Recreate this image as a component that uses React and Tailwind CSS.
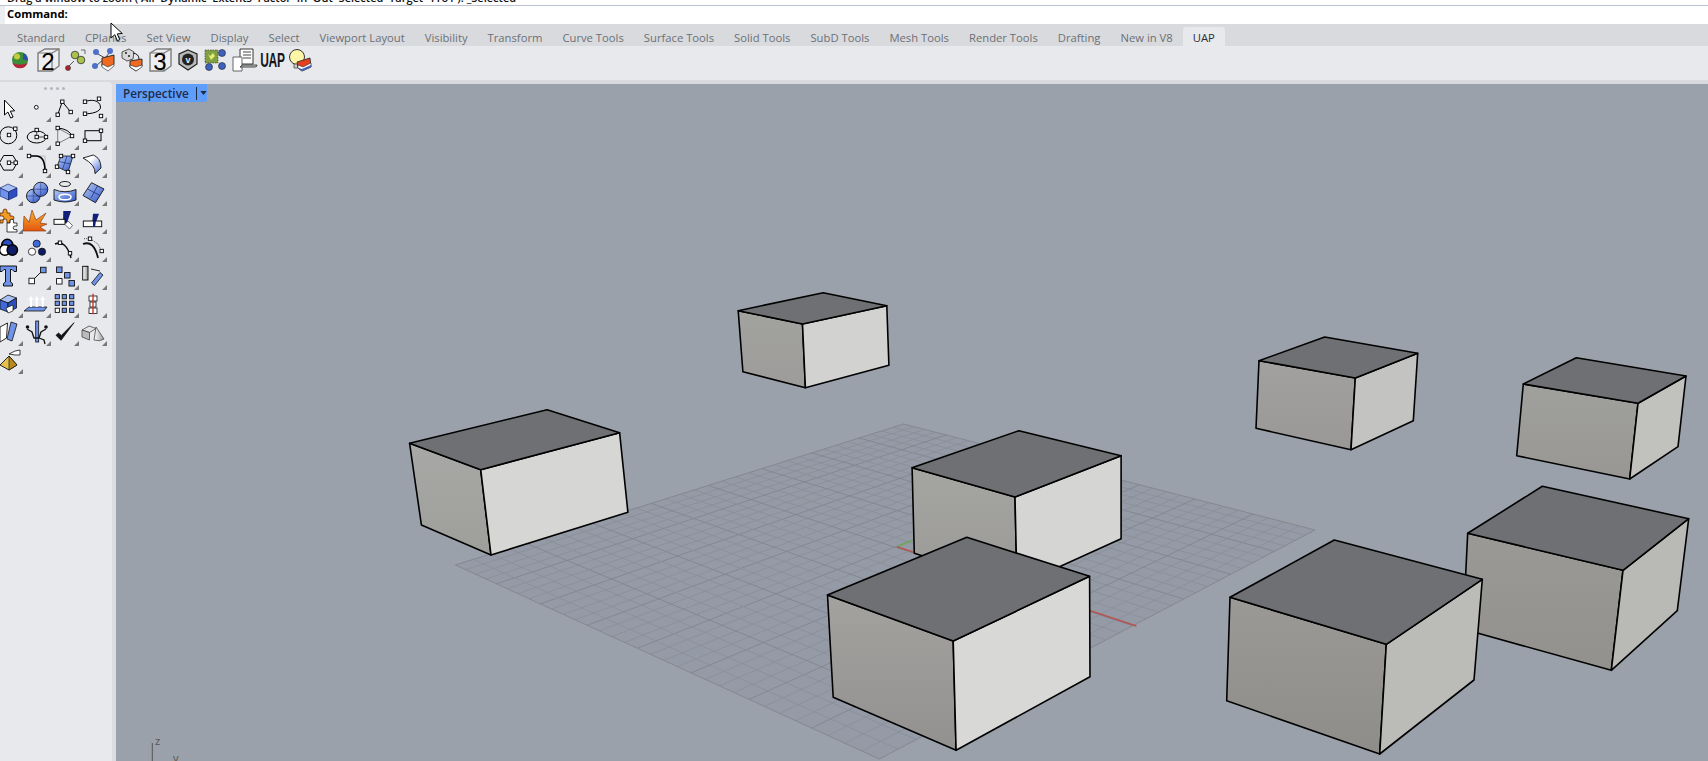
import React from "react";

const tabs = ["Standard", "CPlanes", "Set View", "Display", "Select", "Viewport Layout", "Visibility", "Transform", "Curve Tools", "Surface Tools", "Solid Tools", "SubD Tools", "Mesh Tools", "Render Tools", "Drafting", "New in V8"];

// little white handle square used all over the curve icons
const H = ({ x, y, s = 3.4 }) => <rect x={x - s / 2} y={y - s / 2} width={s} height={s} fill="#fff" stroke="#000" strokeWidth="0.9" />;
const Sq = ({ x, y, s = 5.5, f = "#6f93e8" }) => <rect x={x - s / 2} y={y - s / 2} width={s} height={s} fill={f} stroke="#111" strokeWidth="0.9" />;

const Defs = () => (
  <defs>
    <linearGradient id="ib" x1="0" y1="0" x2="1" y2="1">
      <stop offset="0" stopColor="#b9cdf7" />
      <stop offset="1" stopColor="#2f55c8" />
    </linearGradient>
    <linearGradient id="iw" x1="0" y1="0" x2="1" y2="1">
      <stop offset="0.35" stopColor="#fff" />
      <stop offset="1" stopColor="#3f68d8" />
    </linearGradient>
    <linearGradient id="io" x1="0" y1="0" x2="0" y2="1">
      <stop offset="0" stopColor="#f9b233" />
      <stop offset="1" stopColor="#e2560f" />
    </linearGradient>
    <linearGradient id="ig" x1="0" y1="0" x2="1" y2="0">
      <stop offset="0" stopColor="#fff" />
      <stop offset="1" stopColor="#999" />
    </linearGradient>
  </defs>
);

const tools = [
  // row 1
  { d: <path d="M9.5 6v15l3.4-3 2.8 6 2.4-1-2.8-5.8 4.4-.4z" fill="#fff" stroke="#000" strokeWidth="1" strokeLinejoin="round" /> },
  { d: <circle cx="13.3" cy="13.3" r="1.9" fill="#fff" stroke="#000" strokeWidth="0.9" /> },
  { d: <><path d="M6.7 20.7 11.3 7.7 19.7 18" fill="none" stroke="#000" strokeWidth="1" /><H x={11.3} y={7.7} /><H x={19.7} y={18} /><H x={6.7} y={20.7} /></> },
  { d: <><path d="M6 7.7C12 5 21 6 21.500 13 21.800 18 12 20 6 19.700" fill="none" stroke="#000" strokeWidth="1" /><H x={6} y={7.7} /><H x={20} y={4.7} /><H x={6} y={19.7} /><H x={22} y={22} /></> },
  // row 2
  { d: <><circle cx="13.3" cy="13.3" r="8.500" fill="none" stroke="#000" strokeWidth="1" /><H x={14} y={13} /><H x={20.3} y={6.7} /></> },
  { d: <><ellipse cx="13.7" cy="15" rx="9.500" ry="6" fill="none" stroke="#000" strokeWidth="1" /><path d="M13.700 8v7H23" stroke="#000" strokeWidth="0.7" fill="none" /><H x={13.7} y={8} /><H x={13.7} y={15} /><H x={23} y={15} /></> },
  { d: <><path d="M6.700 6 21 14 6.700 21.700z" fill="none" stroke="#666" strokeWidth="0.8" /><path d="M6.700 6Q18 7 21 14" fill="none" stroke="#000" strokeWidth="1" /><H x={6.7} y={6} /><H x={21} y={14} /><H x={6.7} y={21.7} /></> },
  { d: <><rect x="6" y="8.700" width="16" height="10" fill="none" stroke="#000" strokeWidth="1" /><H x={22} y={8.7} /><H x={6} y={18.7} /></> },
  // row 3
  { d: <><path d="M4.500 12.700 8.700 5.500h9.200l4.400 7.200-4.400 7.400H8.700z" fill="none" stroke="#000" strokeWidth="1" /><path d="M14 12.700h6.700" stroke="#000" strokeWidth="0.7" /><H x={14} y={12.7} /><H x={20.7} y={12.7} /></> },
  { d: <><path d="M6 6H22V21" fill="none" stroke="#aaa" strokeWidth="0.7" /><path d="M6 6H13Q22 6 22 21" fill="none" stroke="#000" strokeWidth="1.700" /><H x={6} y={6} /><H x={22} y={21} /></> },
  { d: <><path d="M10 6H22L17 22 6 16.700z" fill="url(#ib)" stroke="#111" strokeWidth="0.8" /><path d="M16 6 11.500 19.500M8 11.500 19.500 14" stroke="#1d2f78" strokeWidth="0.7" /><H x={10} y={6} /><H x={22} y={6} /><H x={6} y={16.7} /><H x={17} y={22} /></> },
  { d: <path d="M4 8 14.300 5Q22 8 22 18L16 23.700Q17 15 4 8z" fill="url(#iw)" stroke="#111" strokeWidth="0.9" /> },
  // row 4
  { d: <><path d="M5 10 13 6l9 4-8.500 4z" fill="#a9c0f5" stroke="#1a2a70" strokeWidth="0.7" /><path d="M5 10l8.500 4v8L5 18z" fill="#6e93ec" stroke="#1a2a70" strokeWidth="0.7" /><path d="M22 10l-8.500 4v8l8.500-4z" fill="#2b4fc0" stroke="#1a2a70" strokeWidth="0.7" /></> },
  { d: <><circle cx="10.3" cy="18" r="6.800" fill="url(#ib)" stroke="#111" strokeWidth="0.9" /><path d="M3.600 18h13.400M10.300 11.200v13.400" stroke="#1d2f78" strokeWidth="0.5" /><circle cx="17.700" cy="11.300" r="7.100" fill="url(#ib)" stroke="#111" strokeWidth="0.9" /><path d="M10.600 11.300h14.200M17.700 4.200v14.200" stroke="#1d2f78" strokeWidth="0.5" /></> },
  { d: <><ellipse cx="14" cy="6" rx="5.500" ry="2.500" fill="none" stroke="#111" strokeWidth="0.9" /><path d="M3 11.500Q14 16 25 11.500V22Q14 26 3 22z" fill="url(#ib)" stroke="#111" strokeWidth="0.9" /><ellipse cx="14" cy="19" rx="6" ry="2.800" fill="none" stroke="#fff" strokeWidth="1.600" /></> },
  { d: <><path d="M4 17.500 12.500 4.700 25 11 16.500 24.700z" fill="url(#ib)" stroke="#111" strokeWidth="0.9" /><path d="M8.500 11 21 17.500M12 20 18.500 8" stroke="#12246e" strokeWidth="0.7" /></> },
  // row 5
  { d: <><path d="M5 7h3V5a2 2 0 0 1 4 0v2h3v3h2a2 2 0 0 1 0 4h-2v3h-3v-2a2 2 0 0 0-4 0v2H5v-3h2a2 2 0 0 0 0-4H5z" fill="#f29a24" stroke="#5a2a05" strokeWidth="0.8" /><path d="M12 17h3v-2a1.800 1.800 0 0 1 3.600 0v2H22v3h-2a1.800 1.800 0 0 0 0 3.600h2V26h-10z" fill="#fff" stroke="#111" strokeWidth="0.8" /></> },
  { d: <path d="M0 25 1 10 6 16 9 4 13 14 23 7 17 17 24 18 17 21 23 25z" fill="url(#io)" stroke="#7b2c06" strokeWidth="0.6" /> },
  { d: <><path d="M12.300 5H20L16 17h-4z" fill="#0f1f7a" /><rect x="3" y="13.300" width="11" height="5" fill="#fff" stroke="#000" strokeWidth="0.9" /><path d="M17 15l4.500 4.500-3 3.500-4.500-4.500z" fill="#fff" stroke="#444" strokeWidth="0.8" /></> },
  { d: <><path d="M14 7.700h6L16 19h-3z" fill="#0f1f7a" /><rect x="4.300" y="15" width="18.400" height="5.700" fill="#fff" stroke="#000" strokeWidth="0.9" /><path d="M14 15h3l-1 5.700h-2z" fill="#0f1f7a" /></> },
  // row 6
  { d: <><circle cx="12.300" cy="10.800" r="5.500" fill="#2b4fc0" stroke="#000" strokeWidth="1.500" /><circle cx="9.800" cy="16" r="5.200" fill="#fff" stroke="#000" strokeWidth="1.500" /><circle cx="17.300" cy="16" r="5.200" fill="#0e1c63" stroke="#000" strokeWidth="1.500" /></> },
  { d: <><circle cx="13.700" cy="9.700" r="3.600" fill="#3f68d8" stroke="#111" strokeWidth="0.8" /><circle cx="9" cy="17.700" r="3.600" fill="#fff" stroke="#111" strokeWidth="0.8" /><circle cx="19" cy="17.700" r="3.600" fill="#0e1c63" stroke="#111" strokeWidth="0.8" /></> },
  { d: <><path d="M4 10Q15 5.500 20 24" fill="none" stroke="#111" strokeWidth="1.500" /><H x={9} y={8.7} /><H x={19} y={19.3} /></> },
  { d: <><path d="M4 10Q15 6 19 24" fill="none" stroke="#111" strokeWidth="1.800" /><path d="M5 4.700h6M13 6l6 4 3 6" fill="none" stroke="#111" strokeWidth="0.8" strokeDasharray="1 1.200" /><H x={11} y={4.7} /><H x={22.7} y={17} /></> },
  // row 7
  { d: <path d="M5 4h16.500v5.500H19L17 7.500h-1.500v12.500l2 1.500V24H8.500v-2.500l2-1.500V7.500H9L7 9.500H5z" fill="#6f93e8" stroke="#000" strokeWidth="0.9" /> },
  { d: <><path d="M11 17 18 10" stroke="#000" strokeWidth="0.9" /><Sq x={8.7} y={19} f="#fff" /><Sq x={20.3} y={8} /></> },
  { d: <><Sq x={8.3} y={7.7} /><Sq x={16.3} y={13.3} /><Sq x={8.3} y={19.3} f="#fff" /><Sq x={20.7} y={21.3} /></> },
  { d: <><rect x="3.700" y="4.300" width="5.300" height="13.700" fill="url(#ig)" stroke="#000" strokeWidth="0.9" /><path d="M12.500 21 21 10.500l3 2.500-8.500 10.500z" fill="#6f93e8" stroke="#111" strokeWidth="0.8" /><path d="M12 7 21 9" fill="none" stroke="#111" strokeWidth="0.9" /></> },
  // row 8
  { d: <><path d="M5 10 13 5l8.500 3L13 13z" fill="#a9c0f5" stroke="#111" strokeWidth="0.8" /><path d="M5 10l8 3v9l-8-3z" fill="#3f68d8" stroke="#111" strokeWidth="0.8" /><path d="M21.500 8 13 13v9l8.500-4z" fill="#2b4fc0" stroke="#111" strokeWidth="0.8" /><path d="M11 18l7-3v6l-5 2z" fill="#fff" stroke="#111" strokeWidth="0.7" /></> },
  { d: <><path d="M1 21h20l3-4H6z" fill="#6f93e8" stroke="#111" strokeWidth="0.8" /><path d="M8 17V9M13.700 17V9M19.700 17V9" stroke="#fff" strokeWidth="2" /><path d="M5.500 10 8 6l2.500 4zM11.200 10l2.500-4 2.500 4zM17.200 10l2.500-4 2.500 4z" fill="#fff" /></> },
  { d: <>{[[6.3, 6.7, 1], [13.3, 6.7, 1], [20.7, 6.7, 1], [6.3, 13.3, 1], [13.3, 13.3, 1], [20.7, 13.3, 1], [6.3, 20.3, 0], [13.3, 20.3, 1], [20.7, 20.3, 1]].map(([x, y, b]) => <Sq key={`${x}-${y}`} x={x} y={y} s={4.2} f={b ? "#6f93e8" : "#fff"} />)}</> },
  { d: <><rect x="10" y="6" width="8" height="5" fill="#fff" stroke="#111" strokeWidth="0.8" /><rect x="11" y="12" width="6" height="5" fill="#fff" stroke="#111" strokeWidth="0.8" /><rect x="10" y="18" width="8" height="5.500" fill="#fff" stroke="#111" strokeWidth="0.8" /><path d="M14 3.700v20.600" stroke="#c8362b" strokeWidth="1.400" /></> },
  // row 9
  { d: <><path d="M5 9 12.500 5l-1 15-6.500 4z" fill="#fff" stroke="#111" strokeWidth="0.9" /><path d="M16 4l6 2-5 17-5-2z" fill="#6f93e8" stroke="#111" strokeWidth="0.8" /></> },
  { d: <><rect x="12.700" y="3" width="3" height="21" fill="#6f93e8" stroke="#111" strokeWidth="0.8" /><circle cx="4.500" cy="9" r="1.800" fill="#111" /><circle cx="23" cy="9" r="1.800" fill="#111" /><path d="M4 11 9 14 11 20 16 20 18 14 23 11M16 20 21 22 22 26" fill="none" stroke="#111" strokeWidth="1.300" /></> },
  { d: <path d="M5 17.300 10 22.300 23 4.700 10.300 17.500 7.500 15z" fill="#111" stroke="#111" strokeWidth="0.8" strokeLinejoin="round" /> },
  { d: <><path d="M3 12 10 8l7 2.500-6.500 4z" fill="#e4e4e4" stroke="#333" strokeWidth="0.7" /><path d="M3 12l7.500 2.500V22L3 19z" fill="#bbb" stroke="#333" strokeWidth="0.7" /><path d="M17 9 25 21Q21 24 15 22z" fill="url(#ig)" stroke="#333" strokeWidth="0.7" /></> },
  // row 10
  { d: <><path d="M14 10 5 19l9 5 8-5z" fill="#e8c04a" stroke="#111" strokeWidth="0.9" /><path d="M14 10v14l8-5z" fill="#b98a1e" stroke="#111" strokeWidth="0.7" /><path d="M14 8l6-3 5-1v5h-5z" fill="#fff" stroke="#111" strokeWidth="0.8" /></> },
];

const ToolCell = ({ t, i }) => {
  const noArrow = i === 0 || i === 24;
  return (
    <div className="relative w-[28px] h-[28px]">
      <svg viewBox="0 0 28 28" className="w-[28px] h-[28px]">{t.d}</svg>
      {!noArrow && <svg viewBox="0 0 5 5" className="absolute right-0 bottom-0 w-[5px] h-[5px]"><path d="M5 0v5H0z" fill="#777" /></svg>}
    </div>
  );
};

const cube = (n) => (
  <>
    <path d="M4 7 11 3h14v17l-7 5H4z" fill="#eceef1" stroke="#7d7d7d" strokeWidth="1.400" />
    <path d="M4 7h14v18M18 7l7-4" fill="none" stroke="#7d7d7d" strokeWidth="1.200" />
    <text x="14" y="23.500" textAnchor="middle" fontSize="24" fontFamily="Liberation Sans, sans-serif" fill="#000">{n}</text>
  </>
);

const topIcons = [
  <><circle cx="14" cy="14" r="8" fill="#3c8f3a" /><path d="M6.500 17a8 8 0 0 0 15 0q-7.500 3-15 0z" fill="#b5263a" /><circle cx="11" cy="10.500" r="3" fill="#c6cc3c" /><path d="M17 7a8 8 0 0 1 5 7.500l-5-1z" fill="#2c4fa8" /></>,
  cube("2"),
  <><path d="M19 4h4v4M6 22v-2" fill="none" stroke="#666" strokeWidth="1" /><circle cx="13" cy="9" r="3.800" fill="#a9c24a" stroke="#333" strokeWidth="0.8" /><circle cx="19" cy="14" r="3.800" fill="#a9c24a" stroke="#333" strokeWidth="0.8" /><path d="M12 15 7 20" stroke="#333" strokeWidth="0.8" /><circle cx="6" cy="22" r="2.500" fill="#b2202a" stroke="#333" strokeWidth="0.6" /></>,
  <><path d="M6 7 15 12 21 5M6 20 15 12" stroke="#333" strokeWidth="0.9" fill="none" /><circle cx="6" cy="6" r="3" fill="#4d6fc9" /><circle cx="20" cy="5" r="3" fill="#4d6fc9" /><circle cx="5" cy="20" r="3" fill="#4d6fc9" /><path d="M12 12 24 9v9l-6 6-6-4z" fill="#f06a22" stroke="#222" strokeWidth="0.9" /><path d="M12 18l6 3 6-3v2l-6 5-6-4z" fill="#fff" stroke="#222" strokeWidth="0.6" /></>,
  <><path d="M4 6 11 3l5 3-1 7-6 2-5-3z" fill="#d8d8d8" stroke="#444" strokeWidth="0.9" /><circle cx="8" cy="7" r="1" fill="#222" /><circle cx="11" cy="10" r="1" fill="#222" /><path d="M15 7Q21 8 21 13" fill="none" stroke="#111" strokeWidth="1" /><path d="M12 15 24 13v7l-6 5-6-4z" fill="#f06a22" stroke="#222" strokeWidth="0.9" /><path d="M12 19l6 2 6-2v2l-6 4-6-4z" fill="#fff" stroke="#222" strokeWidth="0.6" /></>,
  cube("3"),
  <><path d="M14 4 23 8v10l-9 6-9-6V8z" fill="#b9b9b9" stroke="#222" strokeWidth="1.200" /><circle cx="14" cy="13.500" r="6" fill="#222" /><text x="14" y="17" textAnchor="middle" fontSize="9" fontWeight="bold" fontFamily="Liberation Sans, sans-serif" fill="#eee">v</text></>,
  <><rect x="3" y="4" width="13" height="13" fill="#7fa142" stroke="#333" strokeWidth="0.6" strokeDasharray="1.500 1" /><path d="M6 8l2 2 3-3 2 3-4 4z" fill="#e8ec6c" /><circle cx="20" cy="7" r="3.500" fill="#3d62bd" stroke="#222" strokeWidth="0.6" /><circle cx="7" cy="21" r="3.500" fill="#3d62bd" stroke="#222" strokeWidth="0.6" /><circle cx="20" cy="20" r="3.500" fill="#3d62bd" stroke="#222" strokeWidth="0.6" /></>,
  <><path d="M10 3h13v15H10z" fill="#fff" stroke="#222" strokeWidth="0.9" /><path d="M13 6h8M13 9h8M13 12h8" stroke="#333" strokeWidth="0.9" /><path d="M3 11h9v14H3z" fill="#fff" stroke="#555" strokeWidth="0.9" /><path d="M10 21h15q2 0 2-2H12q-1 2-2 2z" fill="#ccc" stroke="#222" strokeWidth="0.8" /></>,
  null,
  <><circle cx="11" cy="11" r="7.500" fill="#fdf6a6" stroke="#333" strokeWidth="1" /><path d="M8 18h6v4H8z" fill="#ccc" stroke="#333" strokeWidth="0.7" /><path d="M11 16 24 12l1 9-9 4-4-3z" fill="#e2401f" stroke="#222" strokeWidth="0.8" /><path d="M12 19l5 2 8-4v4l-9 4-4-3z" fill="#fff" stroke="#222" strokeWidth="0.5" /><path d="M13 22l3 1 9-4v2l-9 4-3-2z" fill="#3d62bd" /></>,
];

// projective map of the unit square on the construction plane corners
const corners = [[903.6, 424], [1315, 530], [879.3, 759], [455.4, 565]];
const makeMap = ([[x0, y0], [x1, y1], [x2, y2], [x3, y3]]) => {
  const dx1 = x1 - x2, dx2 = x3 - x2, sx = x0 - x1 + x2 - x3;
  const dy1 = y1 - y2, dy2 = y3 - y2, sy = y0 - y1 + y2 - y3;
  const den = dx1 * dy2 - dx2 * dy1;
  const g = (sx * dy2 - dx2 * sy) / den;
  const h = (dx1 * sy - sx * dy1) / den;
  const a = x1 - x0 + g * x1, b = x3 - x0 + h * x3;
  const d = y1 - y0 + g * y1, e = y3 - y0 + h * y3;
  return (u, v) => {
    const w = g * u + h * v + 1;
    return [(a * u + b * v + x0) / w, (d * u + e * v + y0) / w];
  };
};

const CELLS = 32;

function Grid() {
  const map = makeMap(corners);
  const lines = [];
  for (let i = 0; i <= CELLS; i++) {
    const t = i / CELLS;
    const major = i % 4 === 0;
    const a = map(t, 0), b = map(t, 1), c = map(0, t), e = map(1, t);
    lines.push(<line key={`u${i}`} x1={a[0]} y1={a[1]} x2={b[0]} y2={b[1]} stroke={major ? "#81858f" : "#8a8e98"} strokeWidth="0.9" />);
    lines.push(<line key={`v${i}`} x1={c[0]} y1={c[1]} x2={e[0]} y2={e[1]} stroke={major ? "#81858f" : "#8a8e98"} strokeWidth="0.9" />);
  }
  return (
    <g>
      <polygon points={corners.map((p) => p.join(",")).join(" ")} fill="#959ba6" />
      {lines}
      <line x1="897" y1="546.7" x2="912.5" y2="540.3" stroke="#6aa85c" strokeWidth="1.500" />
      <line x1="897" y1="546.7" x2="1136.4" y2="626" stroke="#b5544f" strokeWidth="1.500" />
    </g>
  );
}

const pts = (...p) => p.map((q) => q.join(",")).join(" ");

function Box({ id, top, bottom, right, leftFrom, leftTo, topFill = "#6e7073" }) {
  const [p0, p1, p2, p3] = top;
  const [bl, bf, br] = bottom;
  return (
    <g stroke="#000" strokeWidth="1.600" strokeLinejoin="round">
      <defs>
        <linearGradient id={id} x1="0" y1="0" x2="0" y2="1">
          <stop offset="0" stopColor={leftFrom} />
          <stop offset="1" stopColor={leftTo} />
        </linearGradient>
      </defs>
      <polygon points={pts(p0, p3, bf, bl)} fill={`url(#${id})`} />
      <polygon points={pts(p3, p2, br, bf)} fill={right} />
      <polygon points={pts(p0, p1, p2, p3)} fill={topFill} />
    </g>
  );
}

function Scene() {
  return (
    <svg viewBox="116 84 1592 677" className="block w-full h-full">
      <Grid />
      <Box id="bA" top={[[738.2, 310.7], [823.2, 292.7], [886.8, 305.7], [802.5, 324]]} bottom={[[742.9, 371.7], [805.4, 387.7], [888.9, 365.3]]} right="#d2d2d0" leftFrom="#a2a29f" leftTo="#9d9c9a" />
      <Box id="bB" top={[[409.6, 443.3], [547.1, 409.7], [619.6, 432.7], [480.7, 469.7]]} bottom={[[421.4, 525], [491, 555], [627.9, 512.3]]} right="#d6d6d4" leftFrom="#a8a8a6" leftTo="#9e9e9b" />
      <Box id="bC" top={[[912.1, 467.7], [1018.9, 430.7], [1121.1, 455.7], [1015, 497]]} bottom={[[914.3, 553.3], [1017, 586], [1121.1, 538.7]]} right="#d5d5d3" leftFrom="#a5a5a2" leftTo="#9a9997" />
      <Box id="bD" top={[[827.5, 595], [966.8, 537.3], [1089.6, 576.3], [953.2, 641]]} bottom={[[833.2, 697.3], [956.1, 750.3], [1090, 676.7]]} right="#d8d8d6" leftFrom="#a3a29f" leftTo="#929190" />
      <Box id="bE" top={[[1259, 360.7], [1324.7, 337], [1417.7, 353.3], [1355.3, 378]]} bottom={[[1256, 428.3], [1351, 449.7], [1413.3, 420.7]]} right="#c3c3c1" leftFrom="#a2a19f" leftTo="#999896" />
      <Box id="bF" top={[[1523.3, 384], [1576.3, 357.7], [1686, 376], [1638, 403.3]]} bottom={[[1516.7, 455.7], [1629.7, 479], [1678, 446.7]]} right="#c1c1be" leftFrom="#a0a09d" leftTo="#989794" />
      <Box id="bG" top={[[1467.7, 533.3], [1542.3, 486.3], [1688.7, 518.7], [1623, 570.3]]} bottom={[[1463, 629], [1611.3, 670.3], [1677.3, 610.7]]} right="#b9b9b6" leftFrom="#9a9996" leftTo="#92918d" />
      <Box id="bH" top={[[1230, 597.3], [1334.3, 540], [1482.3, 579.3], [1386.3, 644.3]]} bottom={[[1226.7, 700.7], [1379.7, 754], [1474, 680]]} right="#bbbbb8" leftFrom="#9a9996" leftTo="#8e8d8a" />
      <line x1="152.300" y1="743" x2="152.300" y2="761" stroke="#555" strokeWidth="1" />
      <text x="155" y="744.500" fontSize="11" fontFamily="Open Sans, sans-serif" fill="#555">z</text>
      <text x="173" y="762" fontSize="11" fontFamily="Open Sans, sans-serif" fill="#555">y</text>
    </svg>
  );
}

export default function App() {
  return (
    <div className="relative flex flex-col w-full h-screen overflow-hidden bg-[#d9dadd] font-['Open_Sans',sans-serif]">
      <div className="h-[5px] shrink-0 bg-white overflow-hidden pl-[7px]">
        <div className="-mt-[10px] text-[11px] leading-[16px] font-semibold text-[#111] whitespace-pre">Drag a window to zoom ( All  Dynamic  Extents  Factor  In  Out  Selected  Target  1To1 ): _Selected</div>
      </div>
      <div className="h-px shrink-0 bg-[#bcc3d0]" />
      <div className="h-[18px] shrink-0 flex bg-white">
        <div className="w-[5px] bg-[#eceef2]" />
        <div className="pl-[2px] text-[11.25px] leading-[16px] font-bold text-black">Command:</div>
      </div>

      <div className="h-[22px] shrink-0 flex items-end pl-[7px] bg-[#d9dadd]">
        {tabs.map((t) => (
          <div key={t} className="h-[19px] px-[10px] text-[11.25px] leading-[21px] text-[#6b7077] whitespace-nowrap">{t}</div>
        ))}
        <div className="h-[19px] px-[10px] text-[11.25px] leading-[21px] text-[#2b2e33] bg-[#e8e9ed] rounded-t-[3px]">UAP</div>
      </div>

      <div className="h-[34px] shrink-0 flex bg-[#e8e9ed] pl-[6px]">
        {topIcons.map((d, i) => (
          <div key={i} className="w-[28px] h-[28px] flex items-center justify-center">
            {d ? (
              <svg viewBox="0 0 28 28" className="w-[28px] h-[28px]">{d}</svg>
            ) : (
              <span className="font-['Liberation_Sans',sans-serif] font-bold text-[20px] leading-[28px] text-[#15171c] tracking-[-0.5px] scale-x-[0.6]">UAP</span>
            )}
          </div>
        ))}
      </div>

      <div className="flex flex-1 min-h-0 pt-[4px]">
        <div className="w-[112px] shrink-0 -mt-[2px] bg-[#e8e9ed] rounded-tr-[4px] overflow-hidden">
          <div className="h-[12px] flex items-center justify-center gap-[3px] pr-[4px]">
            {[0, 1, 2, 3].map((d) => <div key={d} className="w-[3px] h-[3px] rounded-full bg-[#b4b7bd]" />)}
          </div>
          <div className="-ml-[5px] grid grid-cols-[repeat(4,28px)] auto-rows-[28px]">
            <svg className="absolute w-0 h-0"><Defs /></svg>
            {tools.map((t, i) => <ToolCell key={i} t={t} i={i} />)}
          </div>
        </div>
        <div className="w-[4px] shrink-0 bg-[#dcdde2]" />
        <div className="relative flex-1 bg-[#9aa1aa]">
          <Scene />
          <div className="absolute left-0 top-0 h-[18px] w-[91px] flex items-center bg-[#5f9dfb] rounded-br-[3px]">
            <span className="pl-[7px] w-[80px] text-[11.75px] font-semibold text-[#1f2a44] leading-[17px] whitespace-nowrap">Perspective</span>
            <div className="w-px h-[13px] bg-[#1f2a44]" />
            <svg viewBox="0 0 8 5" className="ml-[3px] w-[7px] h-[4px]"><path d="M0 0h8L4 5z" fill="#1f2a44" /></svg>
          </div>
        </div>
      </div>

      <svg viewBox="0 0 14 20" className="absolute left-[110px] top-[22px] w-[14px] h-[20px]">
        <path d="M1 1v15l3.800-3.300 2.500 6 2.500-1-2.500-5.800 5-.4z" fill="#fff" stroke="#000" strokeWidth="1" />
      </svg>
    </div>
  );
}
